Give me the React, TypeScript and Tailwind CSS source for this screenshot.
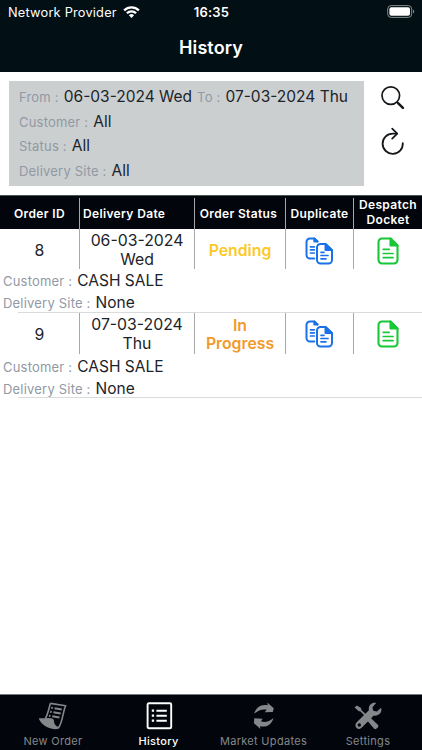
import { useState } from 'react';

/* ─── Types ─────────────────────────────────────────────────────────────── */

interface Order {
  id: number;
  date: string;
  day: string;
  status: 'Pending' | 'In Progress';
  customer: string;
  site: string;
}

type Tab = 'New Order' | 'History' | 'Market Updates' | 'Settings';

/* ─── Data ──────────────────────────────────────────────────────────────── */

const ORDERS: Order[] = [
  { id: 8, date: '06-03-2024', day: 'Wed', status: 'Pending', customer: 'CASH SALE', site: 'None' },
  { id: 9, date: '07-03-2024', day: 'Thu', status: 'In Progress', customer: 'CASH SALE', site: 'None' },
];

const STATUS_STYLE: Record<Order['status'], string> = {
  'Pending':     'text-[#fbc926] pt-[5px]',
  'In Progress': 'text-[#f2992a] px-2 pt-[4px]',
};

const COLUMNS = 'grid grid-cols-[79px_115px_91px_68px_69px]';

/* ─── Page ──────────────────────────────────────────────────────────────── */

export default function App() {
  const [tab, setTab] = useState<Tab>('History');

  return (
    <div className="h-[750px] w-[422px] flex flex-col overflow-hidden bg-white font-['Inter','Liberation_Sans',sans-serif] text-[#1c2329]">
      <header className="h-[72px] shrink-0 bg-[#020f14] text-white">
        <StatusBar />
        <h1 className="mt-[10px] text-center text-[18px] leading-[28px] font-semibold tracking-[0.1px]">History</h1>
      </header>

      <FilterPanel />

      <main className="flex-1">
        <TableHead />
        {ORDERS.map((order, i) => (
          <OrderRow key={order.id} order={order} first={i === 0} />
        ))}
      </main>

      <nav className="h-[56px] shrink-0 grid grid-cols-[106px_105px_105px_104px] border-t border-[#777b7d] bg-[#02050b]">
        <TabButton label="New Order" active={tab} onSelect={setTab}><ScrollIcon /></TabButton>
        <TabButton label="History" active={tab} onSelect={setTab}><ListIcon /></TabButton>
        <TabButton label="Market Updates" active={tab} onSelect={setTab}><RefreshIcon /></TabButton>
        <TabButton label="Settings" active={tab} onSelect={setTab}><ToolsIcon /></TabButton>
      </nav>
    </div>
  );
}

/* ─── Header ────────────────────────────────────────────────────────────── */

function StatusBar() {
  return (
    <div className="h-[24px] grid grid-cols-[1fr_auto_1fr] items-center pl-2 pr-[7px]">
      <div className="flex items-center gap-[6px]">
        <span className="pt-px text-[12.8px] tracking-[0.2px] whitespace-nowrap">Network Provider</span>
        <svg width="17" height="12" viewBox="0 0 17 12" fill="none" stroke="white" strokeWidth="2.3">
          <path d="M1.1 4.4a10.5 10.5 0 0 1 14.8 0" />
          <path d="M3.9 7.3a6.5 6.5 0 0 1 9.2 0" />
          <path d="M8.5 11.9 5.9 9.2a3.8 3.8 0 0 1 5.2 0Z" fill="white" stroke="none" />
        </svg>
      </div>
      <span className="pt-px text-[13px] font-semibold tracking-[0.2px]">16:35</span>
      <svg className="justify-self-end -mt-px" width="28" height="13" viewBox="0 0 28 13">
        <rect x="0.7" y="0.6" width="24" height="11.8" rx="3.4" fill="none" stroke="#858a8c" />
        <rect x="2.4" y="2.2" width="20.6" height="8.6" rx="2" fill="white" />
        <path d="M26 4.4v4.2c1.6-.7 1.6-3.5 0-4.2Z" fill="#858a8c" />
      </svg>
    </div>
  );
}

/* ─── Filters ───────────────────────────────────────────────────────────── */

function FilterPanel() {
  return (
    <section className="h-[123px] shrink-0 flex pt-[9px] pl-[9px]">
      <div className="w-[355px] h-[105px] bg-[#cbcfd0] pl-[10px] pt-[4px] leading-[24.7px]">
        <div className="flex gap-[5px]">
          <Field label="From" value="06-03-2024 Wed" />
          <Field label="To" value="07-03-2024 Thu" />
        </div>
        <Field label="Customer" value="All" />
        <Field label="Status" value="All" />
        <Field label="Delivery Site" value="All" />
      </div>
      <div className="flex-1 flex flex-col items-center gap-[16px] pt-1">
        <button aria-label="Search">
          <svg width="26" height="26" viewBox="0 0 26 26" fill="none" stroke="#15181a">
            <circle cx="10.8" cy="10.6" r="8.8" strokeWidth="1.7" />
            <path d="m17 17 1.5 1.5" strokeWidth="1.7" />
            <path d="m18.3 18.3 4.600 4.600" strokeWidth="2.5" strokeLinecap="round" />
          </svg>
        </button>
        <button aria-label="Refresh">
          <svg width="26" height="28" viewBox="0 0 26 28" fill="none" stroke="#15181a" strokeWidth="1.8" strokeLinecap="round" strokeLinejoin="round">
            <path d="M22.8 16.200A10.100 10.100 0 1 1 12.700 6.600h4.300" />
            <path d="m12.200 1.700 5 4.900-5 5" />
          </svg>
        </button>
      </div>
    </section>
  );
}

function Field({ label, value }: { label: string; value: string }) {
  return (
    <p className="flex items-baseline gap-[5px] whitespace-nowrap">
      <span className="text-[13px] tracking-[0.2px] text-[#9199a4]">{label} :</span>
      <span className="text-[15.5px]">{value}</span>
    </p>
  );
}

/* ─── Table ─────────────────────────────────────────────────────────────── */

function TableHead() {
  return (
    <div className={`${COLUMNS} h-[34px] border-t border-[#4b5455] bg-[#02050b] pt-[2px] text-center text-[12px] leading-[14.6px] font-semibold text-white`}>
      <HeadCell className="pt-px">Order ID</HeadCell>
      <HeadCell className="border-l pl-[3px] pt-px !justify-start">Delivery Date</HeadCell>
      <HeadCell className="border-l pt-px pr-[3px]">Order Status</HeadCell>
      <HeadCell className="border-l pt-px">Duplicate</HeadCell>
      <HeadCell className="border-l pb-px">Despatch Docket</HeadCell>
    </div>
  );
}

function HeadCell({ children, className }: { children: React.ReactNode; className: string }) {
  return (
    <div className={`flex items-center justify-center border-[#a5a7a8] tracking-[0.35px] ${className}`}>
      {children}
    </div>
  );
}

function OrderRow({ order, first }: { order: Order; first: boolean }) {
  return (
    <article>
      <div className={`${COLUMNS} ${first ? 'h-[39px]' : 'h-[41px]'} text-center text-[15.8px] leading-[18.5px]`}>
        <div className="flex items-center justify-center pt-[4px]">{order.id}</div>
        <div className="flex items-center justify-center border-l border-[#a5a7a8] px-2 pt-[3px]">
          {order.date} {order.day}
        </div>
        <div className={`flex items-center justify-center border-l border-[#a5a7a8] font-semibold ${STATUS_STYLE[order.status]}`}>
          {order.status}
        </div>
        <div className={`flex items-center justify-center border-l border-[#a5a7a8] pr-px ${first ? 'pt-[4px]' : 'pt-px'}`}>
          <DuplicateIcon />
        </div>
        <div className={`flex items-center justify-center border-l border-[#a5a7a8] ${first ? 'pt-[4px]' : 'pt-px'}`}>
          <DocketIcon />
        </div>
      </div>
      <div className="h-[43.5px] pl-[3px] pt-[2px] leading-[21.2px]">
        <Field label="Customer" value={order.customer} />
        <Field label="Delivery Site" value={order.site} />
      </div>
      <hr className="ml-[18px] border-[#d9dbdc]" />
    </article>
  );
}

function DuplicateIcon() {
  return (
    <svg width="28" height="28" viewBox="0 0 28 28" fill="none" stroke="#1b72e8" strokeWidth="2" strokeLinejoin="round" strokeLinecap="round">
      <path d="M9.300 21.600H5a3.500 3.500 0 0 1-3.500-3.500V5A3.500 3.500 0 0 1 5 1.500h4.300l3.200 3" />
      <path d="M9.300 1.500v3h3.200Z" fill="#1b72e8" />
      <path d="M5.500 9.800h3.800M5.500 12.900h3.800M5.500 16h3.800" strokeWidth="1.700" />
      <path d="M20.500 6.900h-5a3.500 3.500 0 0 0-3.500 3.500V23a3.500 3.500 0 0 0 3.500 3.500h8A3.500 3.500 0 0 0 27 23v-9.900Z" />
      <path d="M20.500 6.900v6.200H27Z" fill="#1b72e8" />
      <path d="M16 15.300h3M16 18.500h7M16 21.800h5" strokeWidth="1.700" />
    </svg>
  );
}

function DocketIcon() {
  return (
    <svg width="22" height="28" viewBox="0 0 22 28" fill="none" stroke="#18c837" strokeWidth="2.100" strokeLinejoin="round" strokeLinecap="round">
      <path d="M13.500 1.500H5A3.500 3.500 0 0 0 1.500 5v18A3.500 3.500 0 0 0 5 26.500h12a3.500 3.500 0 0 0 3.500-3.500V8.500Z" />
      <path d="M13.500 1.500v7h7Z" fill="#18c837" />
      <path d="M6.200 12.300h6M6.200 16.500h9.800M6.200 20.700h9.800" strokeWidth="1.700" />
    </svg>
  );
}

/* ─── Tab bar ───────────────────────────────────────────────────────────── */

function TabButton({
  label, active, onSelect, children,
}: {
  label: Tab;
  active: Tab;
  onSelect: (tab: Tab) => void;
  children: React.ReactNode;
}) {
  return (
    <button
      onClick={() => onSelect(label)}
      className={`flex flex-col items-center pt-[7px] ${label === active ? 'text-white font-medium' : 'text-[#85878a]'}`}
    >
      {children}
      <span className="mt-[4px] text-[11px] leading-[14px] tracking-[0.3px] whitespace-nowrap">{label}</span>
    </button>
  );
}

function ScrollIcon() {
  return (
    <svg width="28" height="28" viewBox="0 0 28 28" fill="none" stroke="currentColor" strokeWidth="1.600" strokeLinejoin="round">
      <path d="M11.300 1.400 26.700 3.700C24 9 23.500 21 19.500 25.600" />
      <path d="M11.300 1.400C9.800 7 9 12 6.300 16.700" />
      <path d="M.8 16.900c3.500.9 8.500-.8 12.300.4 2 .8.400 3.200 2.200 5.700 1.100 1.500 2.800 2.500 4.400 2.700C15 27.500 4.500 25 .8 16.900Z" fill="currentColor" />
      <path d="m15.500 6.200 7.200 1.200M14.400 10.200l7.300 1.200M13.200 14.200l7.300 1.300" strokeWidth="2" />
      <path d="m12.200 5.700 1.600.2M11.100 9.700l1.600.2M9.900 13.700l1.600.2" strokeWidth="2" />
    </svg>
  );
}

function ListIcon() {
  return (
    <svg width="28" height="28" viewBox="0 0 28 28" fill="none" stroke="currentColor">
      <rect x="2.600" y="1.200" width="23.600" height="25" rx="1.300" strokeWidth="1.900" />
      <path d="M11.400 8.700h10.400M11.400 13.700h10.400M11.400 18.700h10.400" strokeWidth="1.900" />
      <path d="M6.800 8.700h2.300M6.800 13.700h2.300M6.800 18.700h2.300" strokeWidth="2.300" />
    </svg>
  );
}

function RefreshIcon() {
  return (
    <svg width="28" height="28" viewBox="0 0 28 28" fill="currentColor">
      <path d="M4.200 11.600C6 5 11.500 1.800 17.800 3.200L17.200.6 23.800 6.300 22.800 9.900 14.600 10.300 16.700 7.700C12.500 6.700 8.500 8.200 4.200 11.600Z" />
      <path d="M23.500 15.900C21.700 22.500 16.200 25.700 9.900 24.300L10.500 27 3.900 21.200 4.300 16.200 12.600 16.700 11 19.300C15.200 20.800 19.200 19.300 23.500 15.900Z" />
    </svg>
  );
}

function ToolsIcon() {
  return (
    <svg width="28" height="28" viewBox="0 0 28 28" fill="currentColor">
      <path d="M.6 5.600 2.800 3.400 7 6l.4 1.900 7 6.800.9-.3 8.500 8.400c.8.900.8 1.900 0 2.700l-1.200 1.100c-.8.800-1.900.8-2.700 0l-6.300-7.600.1-2.200-7.200-7.200-2-.5Z" />
      <path d="M27 5.700 22.900 9.500 19.300 8.700 18.400 5.200 22.200 1C18-.2 14 3.400 14.900 8.200L2.700 20.200c-3.700 3.900 1.300 9.200 5.200 5.400L19.800 13.500c5 1.100 8.900-3.300 7.200-7.800ZM5.300 24.700a1.700 1.700 0 1 1 0-3.400 1.700 1.700 0 0 1 0 3.400Z" fillRule="evenodd" />
    </svg>
  );
}
